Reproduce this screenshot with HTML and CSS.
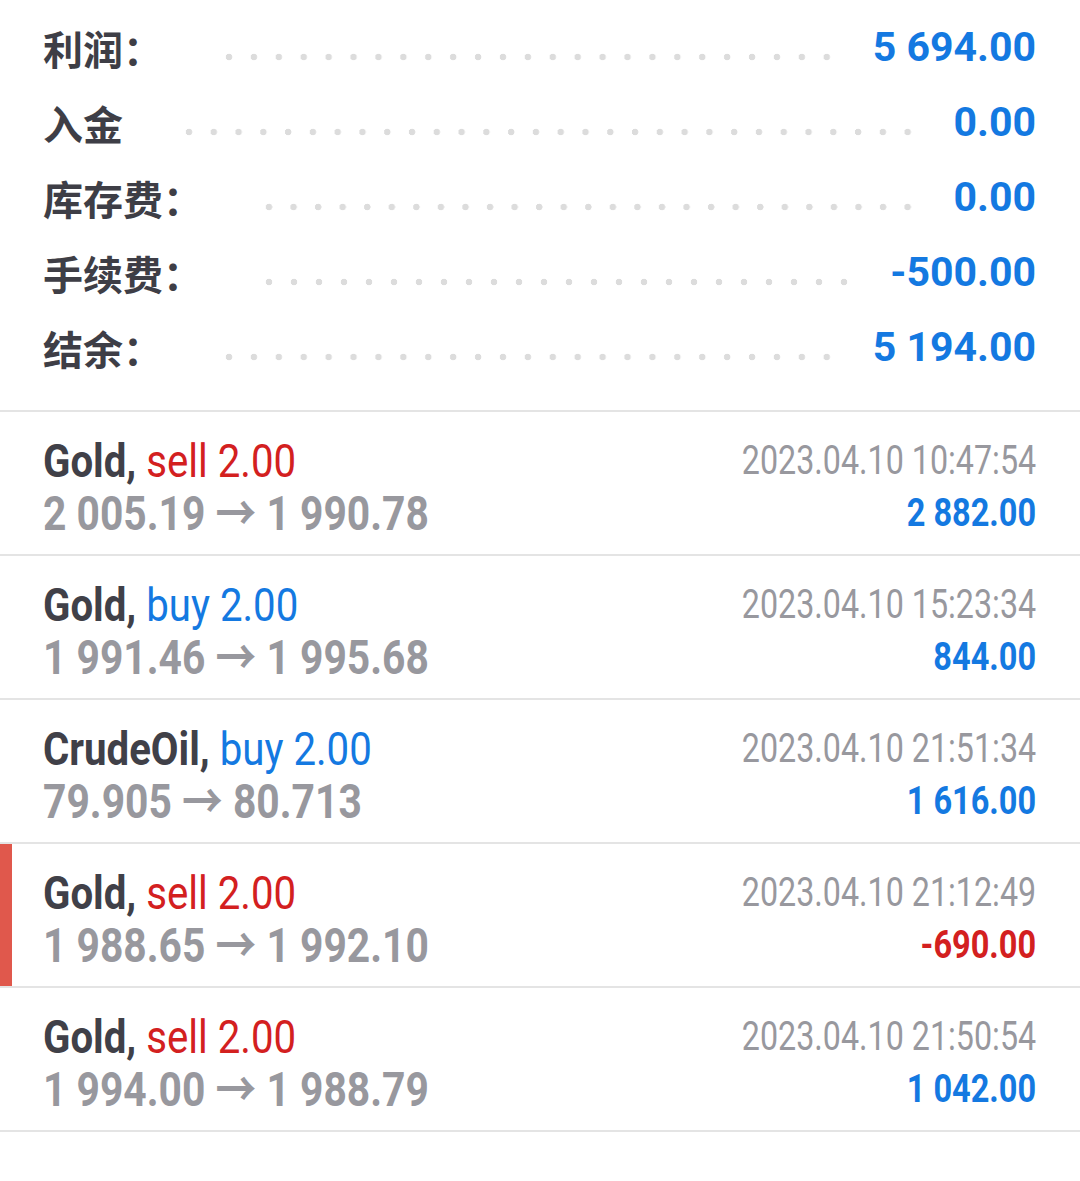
FILE: index.html
```html
<!DOCTYPE html>
<html lang="zh">
<head>
<meta charset="utf-8">
<link rel="stylesheet" href="styles.css">
</head>
<body>
<div class="summary">
  <div class="srow"><span class="label">利润：</span><span class="leader"></span><span class="val">5 694.00</span></div>
  <div class="srow"><span class="label">入金</span><span class="leader"></span><span class="val">0.00</span></div>
  <div class="srow"><span class="label">库存费：</span><span class="leader"></span><span class="val">0.00</span></div>
  <div class="srow"><span class="label">手续费：</span><span class="leader"></span><span class="val">-500.00</span></div>
  <div class="srow"><span class="label">结余：</span><span class="leader"></span><span class="val">5 194.00</span></div>
</div>
<div class="trades">
  <div class="trade">
    <div class="left"><div class="l1"><span class="sym">Gold,</span> <span class="sell">sell 2.00</span></div><div class="l2">2 005.19 → 1 990.78</div></div>
    <div class="right"><div class="date">2023.04.10 10:47:54</div><div class="profit">2 882.00</div></div>
  </div>
  <div class="trade">
    <div class="left"><div class="l1"><span class="sym">Gold,</span> <span class="buy">buy 2.00</span></div><div class="l2">1 991.46 → 1 995.68</div></div>
    <div class="right"><div class="date">2023.04.10 15:23:34</div><div class="profit">844.00</div></div>
  </div>
  <div class="trade">
    <div class="left"><div class="l1"><span class="sym">CrudeOil,</span> <span class="buy">buy 2.00</span></div><div class="l2">79.905 → 80.713</div></div>
    <div class="right"><div class="date">2023.04.10 21:51:34</div><div class="profit">1 616.00</div></div>
  </div>
  <div class="trade marked">
    <div class="left"><div class="l1"><span class="sym">Gold,</span> <span class="sell">sell 2.00</span></div><div class="l2">1 988.65 → 1 992.10</div></div>
    <div class="right"><div class="date">2023.04.10 21:12:49</div><div class="profit loss">-690.00</div></div>
  </div>
  <div class="trade">
    <div class="left"><div class="l1"><span class="sym">Gold,</span> <span class="sell">sell 2.00</span></div><div class="l2">1 994.00 → 1 988.79</div></div>
    <div class="right"><div class="date">2023.04.10 21:50:54</div><div class="profit">1 042.00</div></div>
  </div>
</div>
</body>
</html>
```
FILE: styles.css
```css
* { box-sizing: border-box; }
html, body { margin: 0; padding: 0; background: #ffffff; }
body { width: 1080px; font-family: Roboto, "Noto Sans CJK SC", sans-serif; }

.summary { padding: 10px 44px 25px 43px; }
.srow { display: flex; align-items: center; height: 75px; }
.label {
  font-family: "Noto Sans CJK SC", sans-serif;
  font-weight: 700;
  font-size: 40px;
  color: #3e3e46;
  line-height: 1;
  white-space: nowrap;
}
.leader {
  flex: 1;
  align-self: stretch;
  margin: 0 34px 0 54px;
  background-image: radial-gradient(circle, #dcdcdc 3px, rgba(220,220,220,0) 3.6px);
  background-size: 24px 8px;
  background-repeat: space no-repeat;
  background-position: left calc(50% + 9px);
}
.val {
  font-family: Roboto, sans-serif;
  font-weight: 700;
  font-size: 41px;
  color: #1479e1;
  line-height: 1;
  white-space: nowrap;
}

.trades { border-top: 2px solid #e4e4e4; }
.trade {
  display: flex;
  justify-content: space-between;
  height: 144px;
  padding: 23px 44px 0 43px;
  border-bottom: 2px solid #e4e4e4;
}
.trade.marked { box-shadow: inset 12px 0 0 #e0584c; }
.left, .right { white-space: nowrap; }
.right { text-align: right; }
.l1 { font-size: 47px; line-height: 52px; transform: scaleX(0.855); transform-origin: left center; }
.l2 { font-size: 48px; line-height: 54px; font-weight: 700; color: #98989e; transform: scaleX(0.85); transform-origin: left center; }
.sym { font-weight: 700; color: #404048; }
.sell { color: #d3201f; }
.buy { color: #1479e1; }
.date { font-size: 40px; line-height: 52px; color: #98989e; transform: scaleX(0.806); transform-origin: right center; }
.profit { font-size: 39px; line-height: 52px; font-weight: 700; color: #1479e1; transform: scaleX(0.834); transform-origin: right center; }
.profit.loss { color: #d3201f; }
```
